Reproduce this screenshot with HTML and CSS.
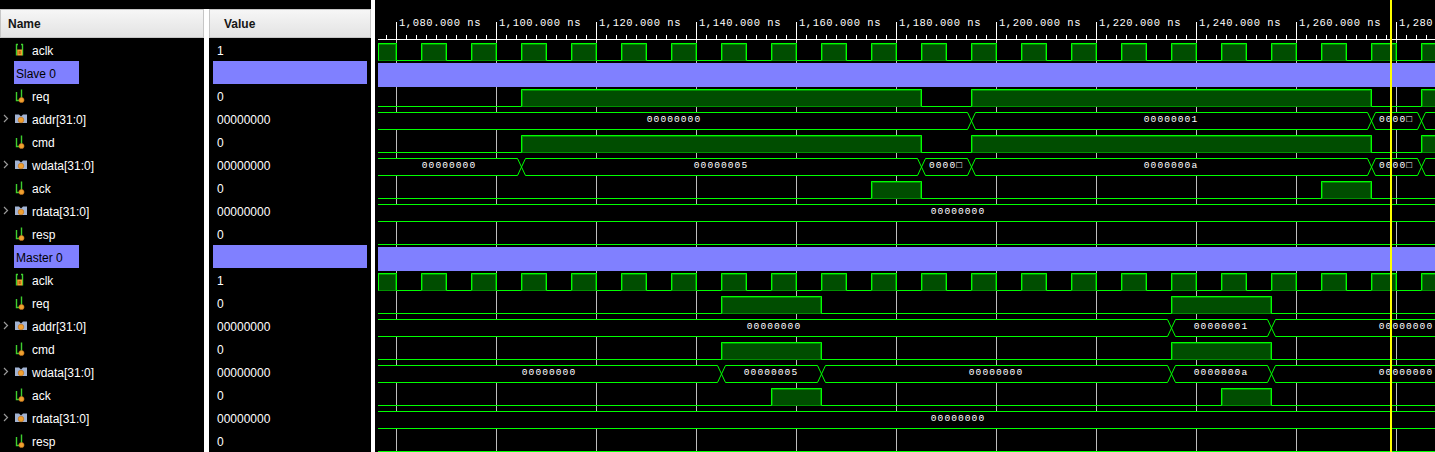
FILE: index.html
```html
<!DOCTYPE html>
<html>
<head>
<meta charset="utf-8">
<title>Waveform</title>
<link rel="stylesheet" href="styles.css">
</head>
<body>
<svg class="defs" xmlns="http://www.w3.org/2000/svg">
  <symbol id="i-clk" viewBox="0 0 12 14">
    <path d="M1.5 1 V12.5 M7.5 1 V12.5 M1 1.5 H3 M6 1.5 H8" stroke="#3ecf2e" stroke-width="1.4" fill="none"/>
    <rect x="2.2" y="6.5" width="5" height="6" fill="#f0a030"/>
    <rect x="3.6" y="8" width="2.2" height="3" fill="#c06a10"/>
  </symbol>
  <symbol id="i-bit" viewBox="0 0 12 14">
    <path d="M1.5 3 V11.5 H4.5 M6.5 0.5 V9" stroke="#3ecf2e" stroke-width="1.4" fill="none"/>
    <circle cx="6.5" cy="11" r="2.6" fill="#f0a030" stroke="#b86a18" stroke-width="0.6"/>
  </symbol>
  <symbol id="i-bus" viewBox="0 0 12 14">
    <path d="M0 2.5 H4 L6 4.5 L8 2.5 H12 V11 H0 Z" fill="#a2b3d3"/>
    <circle cx="6" cy="8" r="2.8" fill="#f0a030" stroke="#b86a18" stroke-width="0.6"/>
  </symbol>
  <symbol id="i-chev" viewBox="0 0 6 9">
    <path d="M1 1 L4.5 4.5 L1 8" stroke="#9a9a9a" stroke-width="1.2" fill="none"/>
  </symbol>
</svg>

<div class="app">
  <div class="panel">
    <div class="col names">
      <div class="hdr">Name</div>
      <div class="row"><span class="chev"></span><svg class="ic"><use href="#i-clk"/></svg><span class="lbl">aclk</span></div>
      <div class="row"><span class="grp">Slave 0</span></div>
      <div class="row"><span class="chev"></span><svg class="ic"><use href="#i-bit"/></svg><span class="lbl">req</span></div>
      <div class="row"><span class="chev"><svg class="cv"><use href="#i-chev"/></svg></span><svg class="ic"><use href="#i-bus"/></svg><span class="lbl">addr[31:0]</span></div>
      <div class="row"><span class="chev"></span><svg class="ic"><use href="#i-bit"/></svg><span class="lbl">cmd</span></div>
      <div class="row"><span class="chev"><svg class="cv"><use href="#i-chev"/></svg></span><svg class="ic"><use href="#i-bus"/></svg><span class="lbl">wdata[31:0]</span></div>
      <div class="row"><span class="chev"></span><svg class="ic"><use href="#i-bit"/></svg><span class="lbl">ack</span></div>
      <div class="row"><span class="chev"><svg class="cv"><use href="#i-chev"/></svg></span><svg class="ic"><use href="#i-bus"/></svg><span class="lbl">rdata[31:0]</span></div>
      <div class="row"><span class="chev"></span><svg class="ic"><use href="#i-bit"/></svg><span class="lbl">resp</span></div>
      <div class="row"><span class="grp">Master 0</span></div>
      <div class="row"><span class="chev"></span><svg class="ic"><use href="#i-clk"/></svg><span class="lbl">aclk</span></div>
      <div class="row"><span class="chev"></span><svg class="ic"><use href="#i-bit"/></svg><span class="lbl">req</span></div>
      <div class="row"><span class="chev"><svg class="cv"><use href="#i-chev"/></svg></span><svg class="ic"><use href="#i-bus"/></svg><span class="lbl">addr[31:0]</span></div>
      <div class="row"><span class="chev"></span><svg class="ic"><use href="#i-bit"/></svg><span class="lbl">cmd</span></div>
      <div class="row"><span class="chev"><svg class="cv"><use href="#i-chev"/></svg></span><svg class="ic"><use href="#i-bus"/></svg><span class="lbl">wdata[31:0]</span></div>
      <div class="row"><span class="chev"></span><svg class="ic"><use href="#i-bit"/></svg><span class="lbl">ack</span></div>
      <div class="row"><span class="chev"><svg class="cv"><use href="#i-chev"/></svg></span><svg class="ic"><use href="#i-bus"/></svg><span class="lbl">rdata[31:0]</span></div>
      <div class="row"><span class="chev"></span><svg class="ic"><use href="#i-bit"/></svg><span class="lbl">resp</span></div>
    </div>
    <div class="col values">
      <div class="hdr vh">Value</div>
      <div class="row v">1</div>
      <div class="row v"><span class="vgrp"></span></div>
      <div class="row v">0</div>
      <div class="row v">00000000</div>
      <div class="row v">0</div>
      <div class="row v">00000000</div>
      <div class="row v">0</div>
      <div class="row v">00000000</div>
      <div class="row v">0</div>
      <div class="row v"><span class="vgrp"></span></div>
      <div class="row v">1</div>
      <div class="row v">0</div>
      <div class="row v">00000000</div>
      <div class="row v">0</div>
      <div class="row v">00000000</div>
      <div class="row v">0</div>
      <div class="row v">00000000</div>
      <div class="row v">0</div>
    </div>
  </div>
  <div class="sep"></div>
  <div class="wave">
    <svg class="wsvg" xmlns="http://www.w3.org/2000/svg" width="1060" height="452">
      <defs>
        <pattern id="clk" patternUnits="userSpaceOnUse" x="371" y="39" width="50" height="23">
          <rect x="0" y="4" width="26" height="18" fill="#009000"/>
          <rect x="2" y="6" width="22" height="15" fill="#004d00"/>
          <path d="M0.5 21.5 V4.5 H25.5 V21.5 H50.5" stroke="#00ff00" fill="none"/>
        </pattern>
        <pattern id="tick" patternUnits="userSpaceOnUse" x="386" y="35" width="10" height="4">
          <rect x="0" y="0" width="1" height="4" fill="#ffffff"/>
        </pattern>
      </defs>
      <g transform="translate(-375 0)">
        <!-- ruler -->
        <rect x="378" y="35" width="1182" height="4" fill="url(#tick)"/>
        <path class="rl" d="M378 39.5 H1560 M396.5 22 V39 M496.5 22 V39 M596.5 22 V39 M696.5 22 V39 M796.5 22 V39 M896.5 22 V39 M996.5 22 V39 M1096.5 22 V39 M1196.5 22 V39 M1296.5 22 V39 M1396.5 22 V39"/>
        <g class="rt">
          <text x="399" y="26">1,080.000 ns</text>
          <text x="499" y="26">1,100.000 ns</text>
          <text x="599" y="26">1,120.000 ns</text>
          <text x="699" y="26">1,140.000 ns</text>
          <text x="799" y="26">1,160.000 ns</text>
          <text x="899" y="26">1,180.000 ns</text>
          <text x="999" y="26">1,200.000 ns</text>
          <text x="1099" y="26">1,220.000 ns</text>
          <text x="1199" y="26">1,240.000 ns</text>
          <text x="1299" y="26">1,260.000 ns</text>
          <text x="1399" y="26">1,280.000 ns</text>
        </g>
        <!-- grid -->
        <path class="gl" d="M396.5 40 V452 M496.5 40 V452 M596.5 40 V452 M696.5 40 V452 M796.5 40 V452 M896.5 40 V452 M996.5 40 V452 M1096.5 40 V452 M1196.5 40 V452 M1296.5 40 V452 M1396.5 40 V452"/>

        <!-- bus interiors hide grid -->
        <g fill="#000">
          <rect x="378" y="113" width="1182" height="16"/>
          <rect x="378" y="159" width="1182" height="16"/>
          <rect x="378" y="205" width="1182" height="16"/>
          <rect x="378" y="320" width="1182" height="16"/>
          <rect x="378" y="366" width="1182" height="16"/>
          <rect x="378" y="412" width="1182" height="16"/>
        </g>

        <!-- clocks -->
        <rect x="378" y="39" width="1182" height="23" fill="url(#clk)"/>
        <rect x="378" y="269" width="1182" height="23" fill="url(#clk)"/>
        <path class="ln" d="M378.5 60.5 V43.5 M378.5 290.5 V273.5"/>

        <!-- group bands -->
        <rect x="378" y="63" width="1182" height="24" fill="#8080ff"/>
        <rect x="378" y="247" width="1182" height="24" fill="#8080ff"/>

        <!-- high fills -->
        <g class="mid">
          <rect x="521" y="89" width="401" height="18"/><rect x="971" y="89" width="401" height="18"/><rect x="1421" y="89" width="140" height="18"/>
          <rect x="521" y="135" width="401" height="18"/><rect x="971" y="135" width="401" height="18"/><rect x="1421" y="135" width="140" height="18"/>
          <rect x="871" y="181" width="51" height="18"/><rect x="1321" y="181" width="51" height="18"/>
          <rect x="721" y="296" width="101" height="18"/><rect x="1171" y="296" width="101" height="18"/>
          <rect x="721" y="342" width="101" height="18"/><rect x="1171" y="342" width="101" height="18"/>
          <rect x="771" y="388" width="51" height="18"/><rect x="1221" y="388" width="51" height="18"/>
        </g>
        <g class="dk">
          <rect x="523" y="91" width="397" height="15"/><rect x="973" y="91" width="397" height="15"/><rect x="1423" y="91" width="136" height="15"/>
          <rect x="523" y="137" width="397" height="15"/><rect x="973" y="137" width="397" height="15"/><rect x="1423" y="137" width="136" height="15"/>
          <rect x="873" y="183" width="47" height="15"/><rect x="1323" y="183" width="47" height="15"/>
          <rect x="723" y="298" width="97" height="15"/><rect x="1173" y="298" width="97" height="15"/>
          <rect x="723" y="344" width="97" height="15"/><rect x="1173" y="344" width="97" height="15"/>
          <rect x="773" y="390" width="47" height="15"/><rect x="1223" y="390" width="47" height="15"/>
        </g>

        <!-- single-bit lines -->
        <path class="ln" d="M378 106.5 H521.5 V89.5 H921.5 V106.5 H971.5 V89.5 H1371.5 V106.5 H1421.5 V89.5 H1560"/>
        <path class="ln" d="M378 152.5 H521.5 V135.5 H921.5 V152.5 H971.5 V135.5 H1371.5 V152.5 H1421.5 V135.5 H1560"/>
        <path class="ln" d="M378 198.5 H871.5 V181.5 H921.5 V198.5 H1321.5 V181.5 H1371.5 V198.5 H1560"/>
        <path class="ln" d="M378 244.5 H1560"/>
        <path class="ln" d="M378 313.5 H721.5 V296.5 H821.5 V313.5 H1171.5 V296.5 H1271.5 V313.5 H1560"/>
        <path class="ln" d="M378 359.5 H721.5 V342.5 H821.5 V359.5 H1171.5 V342.5 H1271.5 V359.5 H1560"/>
        <path class="ln" d="M378 405.5 H771.5 V388.5 H821.5 V405.5 H1221.5 V388.5 H1271.5 V405.5 H1560"/>
        <path class="ln" d="M378 451.5 H1560"/>

        <!-- buses -->
        <path class="ln" d="M378 112.5 H967.5 L975.5 129.5 H1367.5 L1375.5 112.5 H1417.5 L1425.5 129.5 H1560 M378 129.5 H967.5 L975.5 112.5 H1367.5 L1375.5 129.5 H1417.5 L1425.5 112.5 H1560"/>
        <path class="ln" d="M378 158.5 H517.5 L525.5 175.5 H917.5 L925.5 158.5 H967.5 L975.5 175.5 H1367.5 L1375.5 158.5 H1417.5 L1425.5 175.5 H1560 M378 175.5 H517.5 L525.5 158.5 H917.5 L925.5 175.5 H967.5 L975.5 158.5 H1367.5 L1375.5 175.5 H1417.5 L1425.5 158.5 H1560"/>
        <path class="ln" d="M378 204.5 H1560 M378 221.5 H1560"/>
        <path class="ln" d="M378 319.5 H1167.5 L1175.5 336.5 H1267.5 L1275.5 319.5 H1560 M378 336.5 H1167.5 L1175.5 319.5 H1267.5 L1275.5 336.5 H1560"/>
        <path class="ln" d="M378 365.5 H717.5 L725.5 382.5 H817.5 L825.5 365.5 H1167.5 L1175.5 382.5 H1267.5 L1275.5 365.5 H1560 M378 382.5 H717.5 L725.5 365.5 H817.5 L825.5 382.5 H1167.5 L1175.5 365.5 H1267.5 L1275.5 382.5 H1560"/>
        <path class="ln" d="M378 411.5 H1560 M378 428.5 H1560"/>

        <!-- bus values -->
        <g class="bt">
          <text x="674" y="121.5">00000000</text>
          <text x="1171" y="121.5">00000001</text>
          <text x="1396" y="121.5">0000□</text>
          <text x="449" y="167.5">00000000</text>
          <text x="721" y="167.5">00000005</text>
          <text x="946" y="167.5">0000□</text>
          <text x="1171" y="167.5">0000000a</text>
          <text x="1396" y="167.5">0000□</text>
          <text x="958" y="213.5">00000000</text>
          <text x="774" y="328.5">00000000</text>
          <text x="1221" y="328.5">00000001</text>
          <text x="1406" y="328.5">00000000</text>
          <text x="549" y="374.5">00000000</text>
          <text x="771" y="374.5">00000005</text>
          <text x="996" y="374.5">00000000</text>
          <text x="1221" y="374.5">0000000a</text>
          <text x="1406" y="374.5">00000000</text>
          <text x="958" y="420.5">00000000</text>
        </g>

        <!-- cursor -->
        <rect x="1390" y="0" width="2" height="452" fill="#ffff00"/>
      </g>
    </svg>
  </div>
</div>
</body>
</html>
```

FILE: styles.css
```css
html, body {
  margin: 0;
  padding: 0;
}
body {
  background: #000;
  width: 1435px;
  height: 452px;
  overflow: hidden;
  font-family: "Liberation Sans", Arial, sans-serif;
}
.defs {
  display: none;
}
.app {
  display: flex;
  height: 452px;
}
.panel {
  display: flex;
  width: 371px;
  flex: none;
  padding-top: 9px;
  box-sizing: border-box;
  background: #000;
}
.col {
  display: flex;
  flex-direction: column;
}
.names {
  width: 204px;
  border-right: 5px solid #fff;
}
.values {
  width: 162px;
}
.hdr {
  height: 30px;
  box-sizing: border-box;
  border: 1px solid #c6c6c6;
  background: linear-gradient(#f6f6f6, #e3e3e3);
  color: #151515;
  font-weight: bold;
  font-size: 12px;
  display: flex;
  align-items: center;
  padding-left: 7px;
  padding-top: 1px;
}
.vh {
  padding-left: 14px;
}
.row {
  height: 23px;
  flex: none;
  display: flex;
  align-items: center;
  color: #fff;
  font-size: 12px;
  box-sizing: border-box;
}
.chev {
  width: 12px;
  height: 23px;
  margin-left: 3px;
  display: flex;
  align-items: center;
}
.cv {
  width: 6px;
  height: 9px;
  display: block;
}
.ic {
  width: 12px;
  height: 14px;
  display: block;
  flex: none;
}
.lbl {
  margin-left: 5px;
  padding-top: 2px;
}
.grp {
  margin-left: 14px;
  width: 65px;
  height: 23px;
  box-sizing: border-box;
  padding-left: 2px;
  padding-top: 2px;
  background: #8080ff;
  color: #000;
  display: flex;
  align-items: center;
}
.v {
  padding-left: 8px;
  padding-top: 2px;
}
.vgrp {
  align-self: flex-start;
  margin-top: -2px;
  margin-left: -4px;
  width: 154px;
  height: 23px;
  background: #8080ff;
}
.sep {
  width: 4px;
  flex: none;
  background: #fff;
}
.wave {
  flex: 1;
  overflow: hidden;
}
.wsvg {
  display: block;
}
.rl {
  stroke: #ffffff;
  stroke-width: 1;
  fill: none;
}
.gl {
  stroke: #bdbdbd;
  stroke-width: 1;
  fill: none;
}
.ln {
  stroke: #00ff00;
  stroke-width: 1;
  fill: none;
}
.mid rect {
  fill: #009000;
}
.dk rect {
  fill: #004d00;
}
.rt text {
  font-family: "Liberation Mono", "DejaVu Sans Mono", monospace;
  font-size: 10.5px;
  letter-spacing: 0.53px;
  fill: #ffffff;
}
.bt text {
  font-family: "Liberation Mono", "DejaVu Sans Mono", monospace;
  font-size: 9.6px;
  letter-spacing: 1.05px;
  fill: #ffffff;
  text-anchor: middle;
}
```
